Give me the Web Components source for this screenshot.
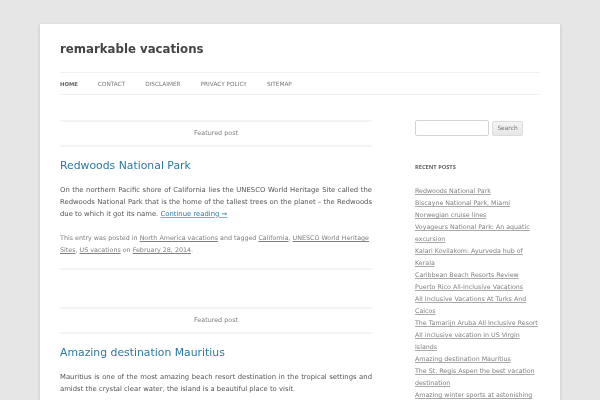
<!DOCTYPE html>
<html><head><meta charset="utf-8"><title>remarkable vacations</title>
<style>
html,body{margin:0;padding:0;height:400px;overflow:hidden;background:#e6e6e6;font-family:"DejaVu Sans",sans-serif;color:#444}
</style></head><body>
<template id="t-page"><style>
:host{display:block;box-sizing:border-box;width:520px;margin:24px 0 0 40px;padding:0 20px;background:#fff;box-shadow:0 1px 3px rgba(100,100,100,.3);height:376px;overflow:hidden}
.wrap{filter:blur(.3px)}
.cols{display:grid;grid-template-columns:312px 125px;column-gap:43px;padding-top:25px}
</style><div class="wrap"><slot name="head"></slot><div class="cols"><slot name="main"></slot><slot name="side"></slot></div></div></template>
<template id="t-head"><style>
:host{display:block}
h1{margin:0;padding:17px 0 15px;font-size:11.75px;line-height:16px;font-weight:700;color:#444}
nav{display:flex;gap:20px;height:21px;align-items:center;border-top:1px solid #f0f0f0;border-bottom:1px solid #f0f0f0;font-size:5.78px;text-transform:uppercase;color:#777}
b{color:#636363;font-size:5.3px}
</style><h1><slot name="title"></slot></h1><nav><b>Home</b><span>Contact</span><span>Disclaimer</span><span>Privacy Policy</span><span>Sitemap</span></nav></template>
<template id="t-post"><style>
:host{display:block;margin-bottom:37px}
.feat{border-top:2px solid #f4f4f4;border-bottom:2px solid #f4f4f4;height:23px;line-height:23px;text-align:center;font-size:6.4px;color:#808080}
h2{margin:0;padding:10px 0 0;font-size:10.85px;line-height:18px;font-weight:400;color:#2b7a9e}
.body{margin:8.5px 0 0;font-size:6.85px;line-height:12px;text-align:justify;color:#555}
</style><div class="feat">Featured post</div><h2><slot name="title"></slot></h2><div class="body"><slot></slot></div><slot name="meta"></slot></template>
<template id="t-meta"><style>
:host{display:block;margin-top:12.5px;padding-bottom:12px;border-bottom:2px solid #f4f4f4;font-size:6.35px;line-height:12px;color:#808080;text-align:left}
</style><slot></slot></template>
<template id="t-side"><style>
:host{display:block}
.search{display:flex;gap:3px;align-items:center}
.in{box-sizing:border-box;width:74px;height:16px;border:1px solid #d4d4d4;border-radius:2px;background:#fff}
.btn{box-sizing:border-box;width:31px;height:15px;line-height:13px;text-align:center;font-size:5.9px;color:#777;border:1px solid #dcdcdc;border-radius:2px;background:linear-gradient(#f4f4f4,#e6e6e6)}
h3{margin:25px 0 12px;font:700 5.7px/12px "Open Sans",sans-serif;text-transform:uppercase;color:#636363}
</style><div class="search"><div class="in"></div><div class="btn">Search</div></div><h3>Recent Posts</h3><slot></slot></template>
<template id="t-links"><style>
:host{display:block;font-size:6.3px;line-height:12px;color:#808080}
::slotted(a){display:block;color:#808080;text-decoration:underline;text-decoration-color:#aaa}
</style><slot></slot></template>
<script>
for(const [n,t] of [['rv-page','t-page'],['rv-head','t-head'],['rv-post','t-post'],['rv-meta','t-meta'],['rv-side','t-side'],['rv-links','t-links']]){
customElements.define(n,class extends HTMLElement{constructor(){super();this.attachShadow({mode:'open'}).appendChild(document.getElementById(t).content.cloneNode(true))}})}
</script>
<rv-page>
<rv-head slot="head"><span slot="title">remarkable vacations</span></rv-head>
<div slot="main">
<rv-post><span slot="title">Redwoods National Park</span>On the northern Pacific shore of California lies the UNESCO World Heritage Site called the Redwoods National Park that is the home of the tallest trees on the planet – the Redwoods due to which it got its name. <u style="color:#2b7a9e;text-decoration-color:#7fb0c6">Continue reading →</u>
<rv-meta slot="meta">This entry was posted in <u>North America vacations</u> and tagged <u>California</u>, <u>UNESCO World Heritage Sites</u>, <u>US vacations</u> on <u>February 28, 2014</u>.</rv-meta></rv-post>
<rv-post><span slot="title">Amazing destination Mauritius</span>Mauritius is one of the most amazing beach resort destination in the tropical settings and amidst the crystal clear water, the island is a beautiful place to visit.</rv-post>
</div>
<rv-side slot="side"><rv-links>
<a>Redwoods National Park</a><a>Biscayne National Park, Miami</a><a>Norwegian cruise lines</a><a>Voyageurs National Park: An aquatic excursion</a><a>Kalari Kovilakom: Ayurveda hub of Kerala</a><a>Caribbean Beach Resorts Review</a><a>Puerto Rico All-Inclusive Vacations</a><a>All Inclusive Vacations At Turks And Caicos</a><a>The Tamarijn Aruba All Inclusive Resort</a><a>All inclusive vacation in US Virgin Islands</a><a>Amazing destination Mauritius</a><a>The St. Regis Aspen the best vacation destination</a><a>Amazing winter sports at astonishing</a>
</rv-links></rv-side>
</rv-page>
</body></html>
